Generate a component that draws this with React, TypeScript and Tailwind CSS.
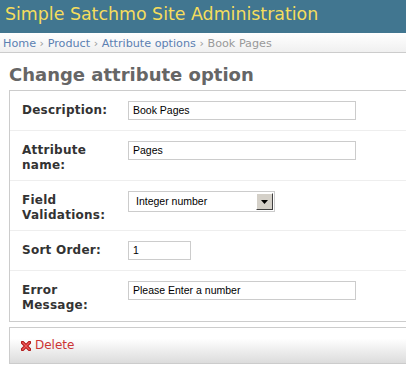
import React from "react";

const sans = { fontFamily: '"DejaVu Sans", Verdana, sans-serif' };
const arial = { fontFamily: '"Liberation Sans", Arial, sans-serif' };

function Row({
  label,
  h,
  children,
  last,
}: {
  label: React.ReactNode;
  h: string;
  children: React.ReactNode;
  last?: boolean;
}) {
  return (
    <div className={`flex items-start pt-[10px] pl-[12px] ${h} ${last ? "" : "border-b border-[#eee]"}`}>
      <div className="w-[106px] shrink-0 mt-[2px] text-[12px] leading-[15px] tracking-[0.25px] font-bold text-[#333]">
        {label}
      </div>
      {children}
    </div>
  );
}

function TextBox({ value, w }: { value: string; w: string }) {
  return (
    <div
      className={`${w} h-[19px] border border-[#ccc] bg-white pl-[4px] flex items-center text-[10.5px] text-black`}
      style={arial}
    >
      {value}
    </div>
  );
}

export default function App() {
  return (
    <div className="w-[406px] h-[366px] overflow-hidden bg-white" style={sans}>
      <div className="h-[33px] bg-[#417690] pl-[5px] pt-[4px]">
        <div className="text-[17.4px] leading-[20px] text-[#f5dd5d] whitespace-nowrap">
          Simple Satchmo Site Administration
        </div>
      </div>
      <div className="h-[20px] border-b border-[#ccc] bg-linear-to-b from-white to-[#f0f0f0] pl-[3px] pt-[4px] text-[11.2px] leading-[13px] whitespace-nowrap">
        <span className="text-[#5b80b2]">Home</span>
        <span className="text-[#999]"> › </span>
        <span className="text-[#5b80b2]">Product</span>
        <span className="text-[#999]"> › </span>
        <span className="text-[#5b80b2]">Attribute options</span>
        <span className="text-[#999]"> › Book Pages</span>
      </div>
      <div className="pl-[9px] w-[440px]">
        <h1 className="mt-[11px] mb-[4px] text-[18px] leading-[22px] font-bold text-[#666] whitespace-nowrap">
          Change attribute option
        </h1>
        <div className="border border-[#ccc]">
          <Row label="Description:" h="h-[40px]">
            <TextBox value="Book Pages" w="w-[228px]" />
          </Row>
          <Row
            label={
              <>
                Attribute
                <br />
                name:
              </>
            }
            h="h-[50px]"
          >
            <TextBox value="Pages" w="w-[228px]" />
          </Row>
          <Row
            label={
              <>
                Field
                <br />
                Validations:
              </>
            }
            h="h-[50px]"
          >
            <div
              className="w-[147px] h-[21px] border border-[#ccc] bg-white flex items-center justify-between pl-[7px] pr-[1px] text-[10.5px] text-black"
              style={arial}
            >
              <span>Integer number</span>
              <div className="w-[17px] h-[17px] bg-[#d4d0c8] border-t border-l border-t-white border-l-white border-r border-b border-r-[#404040] border-b-[#404040] flex items-center justify-center">
                <svg width="7" height="4" viewBox="0 0 7 4">
                  <path d="M0 0H7L3.5 4Z" fill="#000" />
                </svg>
              </div>
            </div>
          </Row>
          <Row label="Sort Order:" h="h-[40px]">
            <TextBox value="1" w="w-[63px]" />
          </Row>
          <Row
            label={
              <>
                Error
                <br />
                Message:
              </>
            }
            h="h-[50px]"
            last
          >
            <TextBox value="Please Enter a number" w="w-[228px]" />
          </Row>
        </div>
        <div className="mt-[5px] h-[37px] border border-[#ccc] bg-linear-to-b from-white from-30% to-[#dcdcdc] pl-[11px] pt-[10px] flex items-start">
          <div className="flex items-center h-[15px] text-[12px] leading-[15px] text-[#cc3434]">
            <svg width="10" height="10" viewBox="0 0 10 10" className="mr-[4px]">
              <path d="M1.5 1.5L8.5 8.5M8.5 1.5L1.5 8.5" stroke="#b01818" strokeWidth="3.4" strokeLinecap="square" />
              <path d="M1.8 1.8L8.2 8.2M8.2 1.8L1.8 8.2" stroke="#ee5a5a" strokeWidth="1.4" strokeLinecap="square" />
            </svg>
            <span>Delete</span>
          </div>
        </div>
      </div>
    </div>
  );
}
